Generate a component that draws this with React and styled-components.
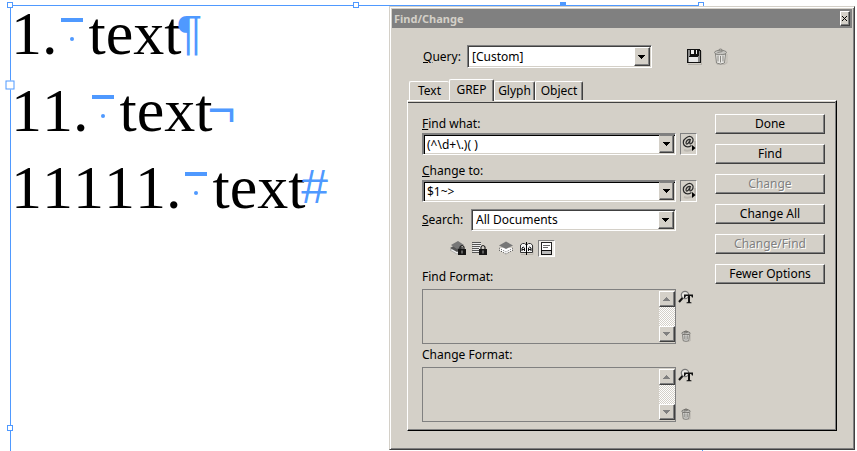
import React, { useState } from 'react';
import styled, { createGlobalStyle, css } from 'styled-components';

const colors = {
    face: '#d4d0c8',
    light: '#ffffff',
    shadow: '#808080',
    dark: '#404040',
    guide: '#4f99ff',
};

const GlobalStyle = createGlobalStyle`
    * {
        box-sizing: border-box;
    }

    body {
        margin: 0;
        background: #fff;
        color: #000;
        font: 12px/16px "Noto Sans", "Open Sans", sans-serif;
    }

    button, input, select, textarea {
        margin: 0;
        padding: 0;
        border: 0;
        border-radius: 0;
        color: inherit;
        font: inherit;
    }
`;

const raised = css`
    border: 1px solid;
    border-color: ${colors.light} ${colors.dark} ${colors.dark} ${colors.light};
    box-shadow: inset -1px -1px ${colors.shadow};
`;

const Page = styled.div`
    position: relative;
    min-height: 100vh;
    padding: 5px 154px 0 10px;
`;

const TextFrame = styled.main`
    position: relative;
    min-height: calc(100vh - 5px);
    border: 1px solid ${colors.guide};
    border-bottom: 0;
`;

const Handle = styled.span`
    position: absolute;
    left: ${({ $x }) => $x};
    top: ${({ $y }) => $y};
    width: ${({ $size }) => $size || 6}px;
    height: ${({ $size }) => $size || 6}px;
    margin: -1px 0 0 -1px;
    transform: translate(-50%, -50%);
    border: 1px solid ${colors.guide};
    background: ${({ $solid }) => ($solid ? colors.guide : colors.light)};
`;

const Line = styled.p`
    display: flex;
    margin: 0 0 23px;
    font: 62px/54px "Liberation Serif", serif;
    font-kerning: none;
    white-space: nowrap;
`;

const TabMark = styled.svg`
    flex: none;
    width: 31px;
    height: 54px;
    fill: ${colors.guide};
`;

const HiddenMark = styled.span`
    margin-left: -5px;
    color: ${colors.guide};
    font-family: "Liberation Sans", sans-serif;
    font-size: 48px;
    font-style: ${({ $slanted }) => ($slanted ? 'italic' : 'normal')};
`;

const Dialog = styled.section`
    position: absolute;
    top: 6px;
    right: 2px;
    left: 389px;
    border: 1px solid;
    border-color: ${colors.face} ${colors.dark} ${colors.dark} ${colors.face};
    background: ${colors.face};
    box-shadow: inset 1px 1px ${colors.light}, inset -1px -1px ${colors.shadow};
    padding: 2px;
`;

const TitleBar = styled.header`
    display: flex;
    align-items: center;
    justify-content: space-between;
    height: 19px;
    padding: 0 2px;
    background: ${colors.shadow};
    color: ${colors.face};

    h1 {
        margin: 0;
        font-size: 11px;
        line-height: 16px;
    }
`;

const CloseButton = styled.button`
    ${raised}
    display: grid;
    place-items: center;
    width: 10px;
    height: 15px;
    background: ${colors.face};
`;

const DialogBody = styled.div`
    padding: 17px 15px 16px;
`;

const QueryRow = styled.div`
    display: flex;
    align-items: center;
    padding-left: 16px;

    label {
        width: 44px;
    }
`;

const QueryTools = styled.div`
    display: flex;
    gap: 10px;
    margin-left: 34px;
`;

const IconButton = styled.button`
    display: grid;
    place-items: center;
    width: ${({ $width }) => $width || 16}px;
    height: ${({ $height }) => $height || 17}px;
    background: transparent;

    ${({ $sunken }) =>
        $sunken &&
        css`
            border: 1px solid;
            border-color: ${colors.shadow} ${colors.light} ${colors.light}
                ${colors.shadow};
        `}
    ${({ $active }) =>
        $active &&
        css`
            background: #f1efeb;
        `}
`;

const SelectBox = styled.div`
    display: grid;
    grid-template-columns: minmax(0, 1fr) 16px;
    flex: ${({ $width }) => ($width ? 'none' : '1')};
    width: ${({ $width }) => ($width ? `${$width}px` : 'auto')};
    height: ${({ $height }) => $height || 22}px;
    border: 1px solid;
    border-color: ${colors.shadow} ${colors.light} ${colors.light}
        ${colors.shadow};
    background: ${colors.light};
    box-shadow: inset 1px 1px ${colors.dark}, inset -1px -1px ${colors.face};
    padding: 1px;

    select {
        grid-area: 1 / 1 / 2 / 3;
        appearance: none;
        padding-left: 3px;
        background: transparent;
        outline: 0;
    }
`;

const Arrow = styled.span`
    ${raised}
    grid-area: 1 / 2;
    display: grid;
    place-items: center;
    background: ${colors.face};
    pointer-events: none;
`;

const ComboBox = styled.div`
    display: flex;
    height: 22px;
    border: 1px solid;
    border-color: ${colors.shadow} ${colors.light} ${colors.light}
        ${colors.shadow};
    background: ${colors.light};
    box-shadow: inset 1px 1px ${colors.shadow}, inset 2px 2px #000,
        inset -1px -1px ${colors.face};
    padding: 1px;

    input {
        flex: 1;
        min-width: 0;
        padding: 2px 0 0 3px;
        background: transparent;
        outline: 0;
    }
`;

const ComboButton = styled.button`
    ${raised}
    display: grid;
    place-items: center;
    width: 15px;
    border-color: ${colors.shadow} ${colors.dark} ${colors.dark} ${colors.face};
    background: ${colors.face};
`;

const TabList = styled.div`
    display: flex;
    align-items: flex-end;
    height: 21px;
    margin-top: 11px;
    padding-left: 2px;
`;

const Tab = styled.button`
    min-width: ${({ $width }) => $width}px;
    height: ${({ $selected }) => ($selected ? 22 : 19)}px;
    margin-bottom: ${({ $selected }) => ($selected ? -1 : 0)}px;
    padding-bottom: ${({ $selected }) => ($selected ? 2 : 0)}px;
    border-top: 1px solid ${colors.light};
    border-left: 1px solid ${colors.light};
    border-right: ${({ $joined }) => ($joined ? 0 : 1)}px solid ${colors.dark};
    border-radius: 2px 2px 0 0;
    background: ${colors.face};
    box-shadow: ${({ $joined }) =>
        $joined ? 'none' : `inset -1px 0 ${colors.shadow}`};
`;

const Pane = styled.div`
    display: flex;
    align-items: flex-start;
    gap: 17px;
    border: 1px solid;
    border-color: ${colors.light} #000 #000 ${colors.light};
    box-shadow: inset -1px -1px ${colors.shadow}, inset 0 1px ${colors.face},
        inset 0 2px ${colors.dark};
    padding: 13px 11px 8px 14px;
`;

const Fields = styled.div`
    flex: 1;
    min-width: 0;
    padding-top: 2px;
`;

const Field = styled.div`
    display: grid;
    grid-template-columns: minmax(0, 1fr) 18px;
    gap: 1px 4px;
    margin-bottom: ${({ $last }) => ($last ? 7 : 8)}px;

    label {
        grid-column: 1 / 3;
    }
`;

const SearchRow = styled.div`
    display: flex;
    align-items: center;
    padding-right: 22px;

    label {
        width: 49px;
    }
`;

const ScopeTools = styled.div`
    display: flex;
    align-items: center;
    gap: 4px;
    margin: 9px 0 12px;
    padding-left: 28px;
`;

const Spacer = styled.span`
    width: 2px;
`;

const FormatField = styled.div`
    display: grid;
    grid-template-columns: minmax(0, 1fr) 16px;
    gap: 4px 2px;

    & + & {
        margin-top: 3px;
    }

    label {
        grid-column: 1 / 3;
    }
`;

const FormatBox = styled.div`
    display: flex;
    height: 55px;
    margin-right: 4px;
    border: 1px solid ${colors.shadow};
    padding: 1px 0;

    textarea {
        flex: 1;
        min-width: 0;
        resize: none;
        overflow: hidden;
        background: transparent;
        outline: 0;
    }
`;

const ScrollBar = styled.div`
    display: flex;
    flex-direction: column;
    justify-content: space-between;
    width: 16px;
    background: repeating-conic-gradient(${colors.light} 0 25%, ${colors.face} 0 50%)
        0 0 / 2px 2px;
`;

const ScrollButton = styled.button`
    ${raised}
    display: grid;
    place-items: center;
    height: 16px;
    background: ${colors.face};
`;

const FormatTools = styled.div`
    display: flex;
    flex-direction: column;
    justify-content: space-between;
    margin-left: -4px;
`;

const Actions = styled.div`
    display: flex;
    flex-direction: column;
    gap: 10px;
    width: 110px;
`;

const ActionButton = styled.button`
    ${raised}
    height: 20px;
    background: ${colors.face};

    &:disabled {
        color: ${colors.shadow};
        text-shadow: 1px 1px ${colors.light};
    }
`;

const ArrowGlyph = ({ up, muted }) => (
    <svg width="8" height="4" viewBox="0 0 8 4" shapeRendering="crispEdges">
        <path
            d={up ? 'M3 0h1v1h1v1h1v1h1v1H0V3h1V2h1V1h1z' : 'M0 0h7v1H6v1H5v1H4v1H3V3H2V2H1V1H0z'}
            fill={muted ? '#808080' : '#000'}
        />
    </svg>
);

const CloseIcon = () => (
    <svg width="6" height="5" viewBox="0 0 6 5" shapeRendering="crispEdges">
        <path d="M0 0h1v1h1v1h1V1h1V0h1v1H4v1H3v1h1v1h1v1H4V4H3V3H2v1H1v1H0V4h1V3h1V2H1V1H0z" />
    </svg>
);

const SaveIcon = () => (
    <svg width="16" height="17" viewBox="0 0 16 17" shapeRendering="crispEdges">
        <path d="M2 16h13V3h1v14H2z" fill="#b5b1aa" />
        <path d="M1 1h12l2 2v12H1z" fill="#111" />
        <path d="M2 2h2v6h9V3h1v11H2z" fill="#888" />
        <path d="M4 2h8v5H4z" fill="#111" />
        <path d="M5 2h3v4H5zM10 2h1v4h-1z" fill="#eee" />
        <path d="M3 9h9v5H3z" fill="#e6e6e6" />
        <path d="M3 8h9v1H3z" fill="#111" />
    </svg>
);

const TrashIcon = ({ size = 17, stroke = '#85847f' }) => (
    <svg width={size} height={size} viewBox="0 0 16 17">
        <path d="M3 15l2 1h7l2-2V6h1v9l-3 2H5z" fill="#bdb9b2" />
        <path d="M3 6h10l-1 9q-4 2-8 0z" fill="#e9e8e5" stroke={stroke} />
        <path d="M5.5 7.5v6M8 8v6.5M10.5 7.5v6" stroke={stroke} />
        <ellipse cx="8" cy="4.5" rx="6" ry="2.2" fill="#c6c5c1" stroke={stroke} />
        <path d="M5 3q3-4 6 0M5 4.5l5-1" fill="none" stroke={stroke} />
    </svg>
);

const SpecialIcon = () => (
    <svg width="14" height="18" viewBox="0 0 14 18">
        <path d="M2 15q5 2 11-2V6" fill="none" stroke="#bdb9b2" strokeWidth="2" />
        <path
            d="M9.5 10.5Q5 13.500 2 10Q0 5.500 4 3Q9-.5 11 4Q11.500 8 8.500 9Q7 9 8.300 4.500Q5 4 4 7.500Q4 10 6 8.500L8 5.500"
            fill="none"
            stroke="#2b2b2b"
            strokeWidth="1.200"
        />
        <path d="M10 10v6l3.500-3z" />
    </svg>
);

const Padlock = () => (
    <g>
        <path d="M10 9V7q2-3 4 0v2" fill="none" stroke="#222" strokeWidth="1.200" />
        <path d="M8 9h8v6H8z" fill="#151515" />
        <path d="M11.500 10.500h1v3h-1z" fill="#aaa" />
    </g>
);

const LockedLayerIcon = () => (
    <svg width="17" height="17" viewBox="0 0 17 17">
        <path d="M0 10l7-4 7 4-7 4z" fill="#eee" stroke="#888" strokeWidth=".5" />
        <path d="M0 8l7-4 7 4-7 4z" fill="#555" />
        <path d="M1 5l7-4 6 4-7 4z" fill="#777" />
        <Padlock />
    </svg>
);

const LockedStoryIcon = () => (
    <svg width="17" height="17" viewBox="0 0 17 17">
        <path d="M2 2h8v11H2z" fill="#eee" />
        <path d="M1 2.500h9M1 4.500h9M1 6.500h8M1 8.500h7M1 10.500h7M1 12.500h7" stroke="#555" />
        <Padlock />
    </svg>
);

const HiddenLayerIcon = () => (
    <svg width="16" height="17" viewBox="0 0 16 17">
        <path d="M1 10l7-4 7 4-7 4z" fill="#fff" />
        <path d="M1 10l7 4 7-4" fill="none" stroke="#333" strokeDasharray="1 1.500" />
        <path d="M1 8l7 4 7-4" fill="#fff" stroke="#555" strokeDasharray="1 1.500" />
        <path d="M1 5.500l7-4 7 4-7 3.500z" fill="#777" />
    </svg>
);

const MasterPageIcon = () => (
    <svg width="15" height="17" viewBox="0 0 15 17">
        <path d="M2 14.500h12V6" fill="none" stroke="#bbb6ae" />
        <path d="M1.500 5l2-1.500h2L7.500 5l2-1.500h2l2 1.500v7.500h-12z" fill="#f4f4f4" stroke="#333" />
        <path d="M7.500 2v13" stroke="#000" />
        <path
            d="M3 11V8q1-2 2.500 0v3M3 9.500h2.500M9.500 11V8q1-2 2.500 0v3M9.500 9.500H12"
            fill="none"
            stroke="#111"
        />
    </svg>
);

const FootnoteIcon = () => (
    <svg width="15" height="15" viewBox="0 0 15 15" shapeRendering="crispEdges">
        <path d="M2.500 1.500h10v12h-10z" fill="#fff" stroke="#222" />
        <path d="M4 4.500h7M4 6.500h5" stroke="#666" />
        <path d="M2.500 9.500h10v4h-10z" fill="#bbb" stroke="#111" />
    </svg>
);

const FindAttributesIcon = () => (
    <svg width="16" height="15" viewBox="0 0 16 15">
        <circle cx="7" cy="5" r="3.700" fill="#e6e5e1" stroke="#777" strokeWidth="1.200" />
        <path d="M4.500 8L1 12" stroke="#111" strokeWidth="2" />
        <path d="M6 4.500h9v3h-1l-.8-1.500H12v6l1.500.5v.8h-5v-.8l1.500-.5V6H8L7 8H6z" fill="#111" />
    </svg>
);

const ComboField = ({ id, label, value, last }) => {
    const [text, setText] = useState(value);

    return (
        <Field $last={last}>
            <label htmlFor={id}>
                <u>{label[0]}</u>
                {label.slice(1)}
            </label>
            <ComboBox>
                <input
                    id={id}
                    value={text}
                    onChange={(e) => setText(e.target.value)}
                />
                <ComboButton type="button" aria-label="Recent">
                    <ArrowGlyph />
                </ComboButton>
            </ComboBox>
            <IconButton type="button" $sunken $width={17} $height={22} aria-label="Special characters">
                <SpecialIcon />
            </IconButton>
        </Field>
    );
};

const FormatSection = ({ id, label }) => (
    <FormatField>
        <label htmlFor={id}>{label}</label>
        <FormatBox>
            <textarea id={id} readOnly />
            <ScrollBar>
                <ScrollButton type="button" aria-label="Scroll up">
                    <ArrowGlyph up muted />
                </ScrollButton>
                <ScrollButton type="button" aria-label="Scroll down">
                    <ArrowGlyph muted />
                </ScrollButton>
            </ScrollBar>
        </FormatBox>
        <FormatTools>
            <IconButton type="button" aria-label="Specify attributes">
                <FindAttributesIcon />
            </IconButton>
            <IconButton type="button" aria-label="Clear attributes">
                <TrashIcon size={12} stroke="#5c5b57" />
            </IconButton>
        </FormatTools>
    </FormatField>
);

const tabs = [
    { name: 'Text', width: 40 },
    { name: 'GREP', width: 45 },
    { name: 'Glyph', width: 41 },
    { name: 'Object', width: 48 },
];

const actions = [
    { label: 'Done' },
    { label: 'Find' },
    { label: 'Change', disabled: true },
    { label: 'Change All' },
    { label: 'Change/Find', disabled: true },
    { label: 'Fewer Options' },
];

const lines = [
    { number: '1.', mark: '¶' },
    { number: '11.', mark: '¬' },
    { number: '11111.', mark: '#', slanted: true },
];

const App = () => {
    const [selected, setSelected] = useState('GREP');

    return (
        <Page>
            <GlobalStyle />
            <TextFrame>
                {lines.map(({ number, mark, slanted }) => (
                    <Line key={number}>
                        <span>{number}</span>
                        <TabMark viewBox="0 0 31 54">
                            <path d="M3 12h22v4H3z" />
                            <circle cx="14" cy="33" r="2" />
                        </TabMark>
                        <span>text</span>
                        <HiddenMark $slanted={slanted}>{mark}</HiddenMark>
                    </Line>
                ))}
                <Handle $x="0" $y="0" />
                <Handle $x="50%" $y="0" />
                <Handle $x="80%" $y="0" $solid />
                <Handle $x="100%" $y="0" />
                <Handle $x="0" $y="80px" $size={9} />
                <Handle $x="0" $y="95%" />
            </TextFrame>
            <Dialog aria-label="Find/Change">
                <TitleBar>
                    <h1>Find/Change</h1>
                    <CloseButton type="button" aria-label="Close">
                        <CloseIcon />
                    </CloseButton>
                </TitleBar>
                <DialogBody>
                    <QueryRow>
                        <label htmlFor="query">
                            <u>Q</u>uery:
                        </label>
                        <SelectBox $width={185} $height={23}>
                            <select id="query">
                                <option>[Custom]</option>
                            </select>
                            <Arrow>
                                <ArrowGlyph />
                            </Arrow>
                        </SelectBox>
                        <QueryTools>
                            <IconButton type="button" aria-label="Save query">
                                <SaveIcon />
                            </IconButton>
                            <IconButton type="button" aria-label="Delete query">
                                <TrashIcon />
                            </IconButton>
                        </QueryTools>
                    </QueryRow>
                    <TabList role="tablist">
                        {tabs.map(({ name, width }, index) => (
                            <Tab
                                key={name}
                                type="button"
                                role="tab"
                                aria-selected={name === selected}
                                $width={width}
                                $selected={name === selected}
                                $joined={tabs[index + 1]?.name === selected}
                                onClick={() => setSelected(name)}
                            >
                                {name}
                            </Tab>
                        ))}
                    </TabList>
                    <Pane>
                        <Fields>
                            <ComboField id="find" label="Find what:" value="(^\d+\.)( )" />
                            <ComboField id="change" label="Change to:" value="$1~>" last />
                            <SearchRow>
                                <label htmlFor="search">
                                    <u>S</u>earch:
                                </label>
                                <SelectBox>
                                    <select id="search">
                                        <option>All Documents</option>
                                    </select>
                                    <Arrow>
                                        <ArrowGlyph />
                                    </Arrow>
                                </SelectBox>
                            </SearchRow>
                            <ScopeTools>
                                <IconButton type="button" $width={17} aria-label="Include locked layers">
                                    <LockedLayerIcon />
                                </IconButton>
                                <IconButton type="button" $width={17} aria-label="Include locked stories">
                                    <LockedStoryIcon />
                                </IconButton>
                                <Spacer />
                                <IconButton type="button" aria-label="Include hidden layers">
                                    <HiddenLayerIcon />
                                </IconButton>
                                <IconButton type="button" aria-label="Include master pages">
                                    <MasterPageIcon />
                                </IconButton>
                                <IconButton
                                    type="button"
                                    $width={17}
                                    $sunken
                                    $active
                                    aria-label="Include footnotes"
                                >
                                    <FootnoteIcon />
                                </IconButton>
                            </ScopeTools>
                            <FormatSection id="find-format" label="Find Format:" />
                            <FormatSection id="change-format" label="Change Format:" />
                        </Fields>
                        <Actions>
                            {actions.map(({ label, disabled }) => (
                                <ActionButton key={label} type="button" disabled={disabled}>
                                    {label}
                                </ActionButton>
                            ))}
                        </Actions>
                    </Pane>
                </DialogBody>
            </Dialog>
        </Page>
    );
};

export default App;
